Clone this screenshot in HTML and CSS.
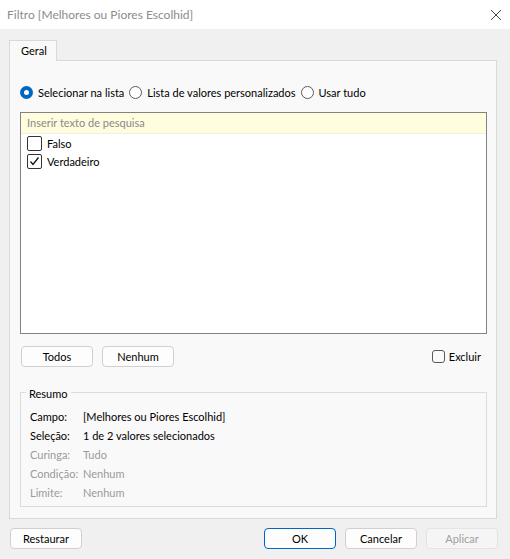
FILE: index.html
```html
<!DOCTYPE html>
<html lang="pt">
<head>
<meta charset="utf-8">
<link rel="stylesheet" href="styles.css">
</head>
<body>
<div class="window">
  <div class="titlebar">
    <span class="title">Filtro [Melhores ou Piores Escolhid]</span>
    <svg class="close" width="12" height="12" viewBox="0 0 12 12"><path d="M1 1 L11 11 M11 1 L1 11" stroke="#4a4a4a" stroke-width="1" fill="none"/></svg>
  </div>
  <div class="content">
    <div class="tabs"><div class="tab">Geral</div></div>
    <div class="panel">
      <div class="radios">
        <span class="radio on"></span><span class="rlabel">Selecionar na lista</span>
        <span class="radio"></span><span class="rlabel">Lista de valores personalizados</span>
        <span class="radio"></span><span class="rlabel">Usar tudo</span>
      </div>
      <div class="listbox">
        <div class="search">Inserir texto de pesquisa</div>
        <div class="item"><span class="cb"></span>Falso</div>
        <div class="item"><span class="cb"><svg width="13" height="13" viewBox="0 0 13 13"><path d="M2.5 6.5 L5 9.5 L10.5 2.5" stroke="#111" stroke-width="1.3" fill="none"/></svg></span>Verdadeiro</div>
      </div>
      <div class="btnrow">
        <button class="btn">Todos</button>
        <button class="btn">Nenhum</button>
        <span class="spacer"></span>
        <span class="excl"><span class="cb2"></span>Excluir</span>
      </div>
      <fieldset class="summary">
        <legend>Resumo</legend>
        <div class="row"><span class="k">Campo:</span><span>[Melhores ou Piores Escolhid]</span></div>
        <div class="row"><span class="k">Seleção:</span><span>1 de 2 valores selecionados</span></div>
        <div class="row dim"><span class="k">Curinga:</span><span>Tudo</span></div>
        <div class="row dim"><span class="k">Condição:</span><span>Nenhum</span></div>
        <div class="row dim"><span class="k">Limite:</span><span>Nenhum</span></div>
      </fieldset>
    </div>
    <div class="footer">
      <button class="btn">Restaurar</button>
      <span class="spacer"></span>
      <button class="btn ok">OK</button>
      <button class="btn">Cancelar</button>
      <button class="btn disabled">Aplicar</button>
    </div>
  </div>
</div>
</body>
</html>
```
FILE: styles.css
```css
* { box-sizing: border-box; }
html, body { margin: 0; padding: 0; }
body {
  width: 510px;
  height: 559px;
  overflow: hidden;
  background: #f0f0f0;
  font-family: Lato, "Noto Sans", sans-serif;
  font-size: 11px;
  color: #000;
}
.window { width: 510px; height: 559px; display: flex; flex-direction: column; }
.titlebar {
  height: 29px;
  background: #fff;
  display: flex;
  align-items: center;
  padding-left: 7px;
}
.title { color: #8c8c8c; font-size: 12px; flex: 1; }
.close { margin-right: 8px; margin-top: 1px; }
.content { display: flex; flex-direction: column; }
.tabs { margin-top: 11px; padding-left: 9px; display: flex; }
.tab {
  width: 48px;
  height: 21px;
  border: 1px solid #d9d9d9;
  border-bottom: none;
  background: #f9f9f9;
  padding-left: 11px;
  line-height: 20px;
  margin-bottom: -1px;
  position: relative;
  z-index: 1;
}
.panel {
  margin-left: 9px;
  width: 488px;
  height: 459px;
  border: 1px solid #d9d9d9;
  background: #f9f9f9;
  padding: 0 9px 0 10px;
  display: flex;
  flex-direction: column;
}
.radios {
  margin-top: 23px;
  height: 16px;
  display: flex;
  align-items: center;
}
.radio {
  width: 13px;
  height: 13px;
  border-radius: 50%;
  border: 1px solid #5a5a5a;
  background: #fff;
  margin-right: 5px;
}
.radio.on {
  border: 4px solid #0067c0;
  background: #fff;
}
.rlabel { margin-right: 5px; }
.listbox {
  margin-top: 12px;
  height: 222px;
  border: 1px solid #828282;
  background: #fff;
}
.search {
  height: 21px;
  background: #fffddd;
  border-bottom: 1px solid #efefe2;
  color: #8a8a8a;
  padding-left: 6px;
  line-height: 20px;
}
.item {
  height: 18px;
  display: flex;
  align-items: center;
  padding-left: 6px;
}
.cb {
  width: 15px;
  height: 15px;
  border: 1px solid #333;
  border-radius: 2px;
  background: #fff;
  margin-right: 5px;
  display: flex;
  align-items: center;
  justify-content: center;
}
.btnrow {
  margin-top: 12px;
  height: 21px;
  display: flex;
  align-items: center;
  padding-left: 1px;
  gap: 9px;
}
.spacer { flex: 1; }
.btn {
  width: 72px;
  height: 21px;
  border: 1px solid #d0d0d0;
  border-radius: 4px;
  background: #fdfdfd;
  font-family: inherit;
  font-size: 11px;
  color: #000;
  padding: 0;
}
.excl { display: flex; align-items: center; margin-right: 6px; }
.cb2 {
  width: 13px;
  height: 13px;
  border: 1px solid #5a5a5a;
  border-radius: 3px;
  background: #fafafa;
  margin-right: 4px;
}
.summary {
  margin: 16px 0 0 0;
  padding: 6px 10px 4px 9px;
  border: 1px solid #dcdcdc;
  min-width: 0;
}
.summary legend {
  padding: 4px 3px 0 3px;
  margin-left: -4px;
  line-height: 14px;
}
.row { display: flex; height: 19px; line-height: 19px; }
.row .k { width: 53px; }
.row.dim { color: #9a9a9a; }
.footer {
  margin-top: 9px;
  padding: 0 12px 0 10px;
  display: flex;
  gap: 9px;
}
.btn.ok { border-color: #0067c0; }
.btn.disabled { color: #a0a0a0; border-color: #e3e3e3; background: #f5f5f5; }
```
